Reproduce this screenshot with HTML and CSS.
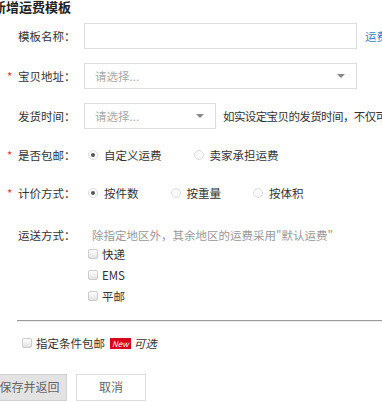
FILE: index.html
```html
<!DOCTYPE html>
<html lang="zh-CN">
<head>
    <meta charset="UTF-8">
    <meta name="viewport" content="width=device-width, initial-scale=1.0">
    <title>新增运费模板</title>
    <link rel="stylesheet" href="styles.css">
</head>
<body>
    <div class="page">
        <h2 class="page-title">新增运费模板</h2>

        <div class="form-row">
            <label class="form-label">模板名称：</label>
            <input class="text-input wide" type="text">
            <a class="help-link" href="#">运费模板使用说明</a>
        </div>

        <div class="form-row">
            <label class="form-label required">宝贝地址：</label>
            <div class="select wide">
                <span class="placeholder">请选择...</span>
                <span class="arrow"></span>
            </div>
        </div>

        <div class="form-row">
            <label class="form-label">发货时间：</label>
            <div class="select short">
                <span class="placeholder">请选择...</span>
                <span class="arrow"></span>
            </div>
            <span class="tip">如实设定宝贝的发货时间，不仅可避免发货咨询和纠纷，还能促进成交！</span>
        </div>

        <div class="form-row compact">
            <label class="form-label required">是否包邮：</label>
            <span class="radio-item"><i class="radio checked"></i>自定义运费</span>
            <span class="radio-item"><i class="radio"></i>卖家承担运费</span>
        </div>

        <div class="form-row compact">
            <label class="form-label required">计价方式：</label>
            <span class="radio-item"><i class="radio checked"></i>按件数</span>
            <span class="radio-item"><i class="radio"></i>按重量</span>
            <span class="radio-item"><i class="radio"></i>按体积</span>
        </div>

        <div class="ship-block">
            <div class="ship-head">
                <label class="form-label">运送方式：</label>
                <span class="hint">除指定地区外，其余地区的运费采用"默认运费"</span>
            </div>
            <div class="ship-list">
                <span class="check-item"><i class="checkbox"></i>快递</span>
                <span class="check-item"><i class="checkbox"></i>EMS</span>
                <span class="check-item"><i class="checkbox"></i>平邮</span>
            </div>
        </div>

        <hr class="divider">

        <div class="free-row">
            <i class="checkbox"></i>指定条件包邮
            <span class="badge-new">New</span>
            <em class="optional">可选</em>
        </div>

        <div class="actions">
            <button class="btn btn-save">保存并返回</button>
            <button class="btn btn-cancel">取消</button>
        </div>
    </div>
</body>
</html>
```

FILE: styles.css
```css
html, body {
    overflow: hidden;
}

body {
    margin: 0;
    padding: 0;
    background-color: #fff;
    color: #333;
    font-family: "Noto Sans CJK SC", "Liberation Sans", sans-serif;
    font-size: 11.5px;
    line-height: 1.4;
}

.page {
    width: 382px;
    height: 402px;
    position: relative;
}

.page-title {
    margin: 0 0 0 -7px;
    height: 16px;
    font-size: 13px;
    line-height: 13px;
    font-weight: bold;
    color: #222;
    white-space: nowrap;
}

.form-row {
    display: flex;
    align-items: center;
    height: 40px;
    white-space: nowrap;
}

.form-row.compact {
    height: 38px;
}

.form-label {
    flex: none;
    width: 66px;
    padding-left: 18px;
    position: relative;
}

.form-label.required::before {
    content: "*";
    position: absolute;
    left: 7px;
    top: 0;
    color: #e4393c;
}

.text-input {
    box-sizing: border-box;
    flex: none;
    height: 26px;
    border: 1px solid #ddd;
    margin: 0;
    padding: 0 8px;
    font: inherit;
}

.wide {
    width: 273px;
}

.short {
    width: 132px;
}

.help-link {
    flex: none;
    margin-left: 8px;
    color: #3a7fc6;
    text-decoration: none;
}

.select {
    box-sizing: border-box;
    flex: none;
    height: 26px;
    border: 1px solid #ddd;
    display: flex;
    align-items: center;
    justify-content: space-between;
    padding: 0 11px 0 10px;
}

.placeholder {
    color: #aaa;
}

.arrow {
    width: 0;
    height: 0;
    border-left: 4px solid transparent;
    border-right: 4px solid transparent;
    border-top: 4px solid #888;
}

.tip {
    flex: none;
    margin-left: 7px;
    color: #333;
    letter-spacing: -0.6px;
}

.radio-item {
    display: inline-flex;
    align-items: center;
    margin-right: 32px;
}

.radio-item:first-of-type {
    margin-left: 4px;
}

.radio {
    box-sizing: border-box;
    width: 10px;
    height: 10px;
    border: 1px solid #ddd;
    border-radius: 50%;
    margin-right: 6px;
    display: inline-flex;
    align-items: center;
    justify-content: center;
    background: #fafafa;
}

.radio.checked::after {
    content: "";
    width: 4px;
    height: 4px;
    border-radius: 50%;
    background: #555;
}

.ship-block {
    padding-top: 15px;
}

.ship-head {
    display: flex;
    align-items: center;
    white-space: nowrap;
}

.hint {
    margin-left: 8px;
    color: #999;
}

.ship-list {
    display: flex;
    flex-direction: column;
    padding-left: 88px;
    padding-top: 0;
}

.check-item {
    display: flex;
    align-items: center;
    height: 21px;
}

.checkbox {
    box-sizing: border-box;
    display: inline-block;
    width: 10px;
    height: 10px;
    border: 1px solid #ccc;
    border-radius: 2px;
    background: linear-gradient(#fff, #e2e2e2);
    margin-right: 4px;
}

.divider {
    margin: 14px 0 0 17px;
    height: 0;
    border: none;
    border-top: 1px solid #999;
    border-bottom: 1px solid #eee;
}

.free-row {
    display: flex;
    align-items: center;
    padding-left: 22px;
    margin-top: 13px;
    white-space: nowrap;
}

.badge-new {
    margin-left: 5px;
    padding: 0 2px;
    height: 11px;
    line-height: 11px;
    font-size: 8px;
    font-style: italic;
    color: #fff;
    background: #d9001b;
}

.optional {
    margin-left: 3px;
    color: #333;
}

.actions {
    display: flex;
    margin-top: 23px;
    margin-left: -8px;
}

.btn {
    box-sizing: border-box;
    height: 27px;
    font: inherit;
    font-size: 12px;
    color: #666;
    border: 1px solid #ddd;
    margin: 0;
}

.btn-save {
    width: 75px;
    background: #e3e3e3;
    border-color: #d0d0d0;
}

.btn-cancel {
    margin-left: 9px;
    width: 70px;
    background: #fff;
}
```
